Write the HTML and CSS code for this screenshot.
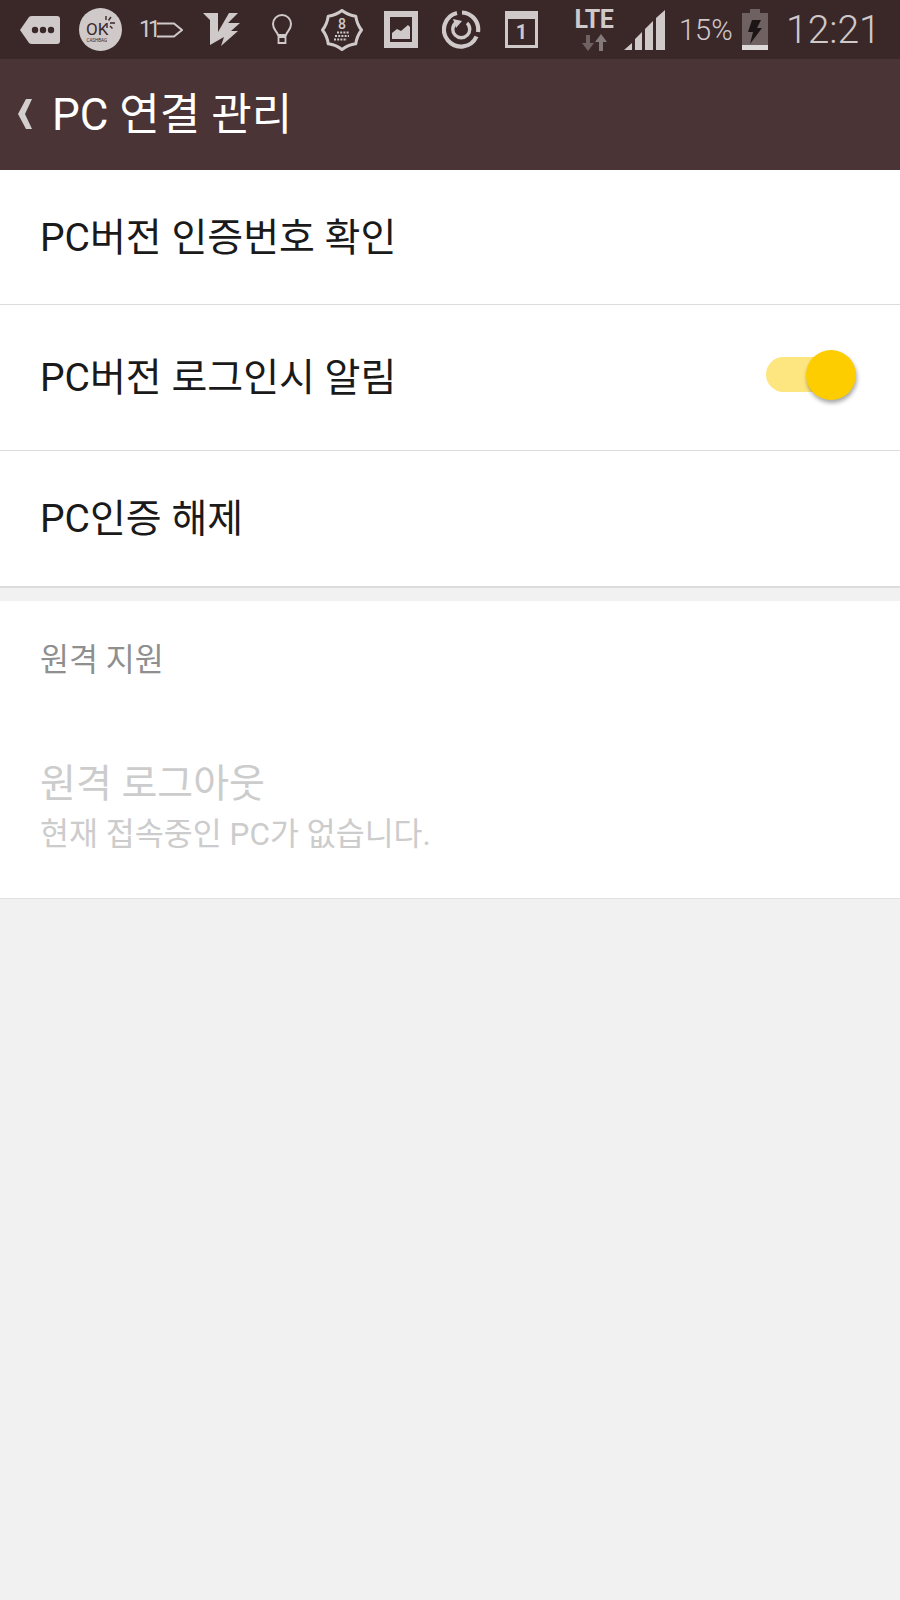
FILE: index.html
```html
<!DOCTYPE html>
<html lang="ko">
  <head>
    <meta charset="UTF-8" />
    <title>PC 연결 관리</title>
    <link rel="stylesheet" href="styles.css">
  </head>
  <body>
    <div class="status-bar">
      <svg class="ic ic-msg" viewBox="0 0 40 30"><path d="M0 15 9 2Q10 1 12 1H37Q40 1 40 4V26Q40 29 37 29H12Q10 29 9 28Z" fill="#cfc9ca"/><circle cx="15" cy="15" r="3.2" fill="#3a2829"/><circle cx="23" cy="15" r="3.2" fill="#3a2829"/><circle cx="31" cy="15" r="3.2" fill="#3a2829"/></svg>
      <svg class="ic ic-ok" viewBox="0 0 43 43"><circle cx="21.5" cy="21.5" r="21.5" fill="#cfc9ca"/><text x="7" y="27" class="ok-text">OK</text><text x="7.5" y="34" class="ok-small">CASHBAG</text><path d="M27 8v4M32 9l-2.500 3.500M36 15h-5M31 18l2.500 2.500M28 16v4" stroke="#3a2829" stroke-width="1.400" fill="none"/></svg>
      <div class="ic-11"><span>11</span><svg viewBox="0 0 26 16"><path d="M0 1.500H17L25 8 17 14.500H0" stroke="#cfc9ca" stroke-width="2" fill="none"/></svg></div>
      <svg class="ic ic-v" viewBox="0 0 37 35"><path d="M0 1H15L15 20 26 1H35L25 11H37L28 19H35L18 34 21 25 7 33 7 8Z" fill="#cfc9ca"/></svg>
      <svg class="ic ic-bulb" viewBox="0 0 22 32"><path d="M7 21C6 17 2 16 2 10A9 9 0 0 1 20 10C20 16 16 17 15 21Z" stroke="#cfc9ca" stroke-width="2" fill="none"/><path d="M7.500 23H14.500V29H7.500Z" stroke="#cfc9ca" stroke-width="1.800" fill="none"/></svg>
      <div class="ic-badge">
        <svg viewBox="0 0 42 42"><path d="M21 1.500Q27.100 6.200 34.800 7.200 35.800 14.900 40.500 21 35.800 27.100 34.800 34.800 27.100 35.800 21 40.500 14.900 35.800 7.200 34.800 6.200 27.100 1.500 21 6.200 14.900 7.200 7.200 14.900 6.200 21 1.500Z" stroke="#cfc9ca" stroke-width="3" fill="none" stroke-linejoin="round"/><path d="M16 23.500h12M14 27h14M13 30.500h13" stroke="#cfc9ca" stroke-width="1.800" stroke-dasharray="2 1.200" fill="none"/></svg>
        <span>8</span>
      </div>
      <svg class="ic ic-pic" viewBox="0 0 34 37"><path fill-rule="evenodd" d="M0 0H34V37H0ZM6 6V31H28V6Z" fill="#cfc9ca"/><path d="M8 28V22L13 18 17 20 24 14 26 16V28Z" fill="#cfc9ca"/></svg>
      <svg class="ic ic-sync" viewBox="0 0 39 39"><path d="M20 2.500A17 17 0 0 1 36 22" stroke="#cfc9ca" stroke-width="4.200" fill="none"/><path d="M34.500 26.500A17 17 0 1 1 15 3" stroke="#cfc9ca" stroke-width="4.200" fill="none"/><path d="M13.500 13A8.500 8.500 0 1 0 25 13" stroke="#cfc9ca" stroke-width="3.400" fill="none"/><path d="M11 9 20 11 14 18Z" fill="#cfc9ca"/></svg>
      <div class="ic-cal"><span>1</span></div>
      <div class="ic-lte">
        <span>LTE</span>
        <svg viewBox="0 0 25 17"><path d="M8 1V9H12L6 17 0 9H4V1Z" fill="#6f6263"/><path d="M17 17V8H13L19 0 25 8H21V17Z" fill="#857a7b"/></svg>
      </div>
      <svg class="ic ic-signal" viewBox="0 0 41 40"><path d="M0 40 8 33V40ZM11 40V29L18 22V40ZM21 40V19L29 11V40ZM32 40V8L41 0V40Z" fill="#cfc9ca"/></svg>
      <span class="battery-text">15%</span>
      <svg class="ic ic-batt" viewBox="0 0 26 41"><path d="M8 0H18V4H26V41H0V4H8Z" fill="#6f6162"/><path d="M0 36H26V41H0Z" fill="#ded9d9"/><path d="M10 11H19L15 19H20L8 35 11 23H6Z" fill="#1b1516"/></svg>
      <span class="clock">12:21</span>
    </div>

    <div class="app-bar">
      <svg class="back" viewBox="0 0 16 32"><path d="M15 1H9L1 16 9 31H15L8 16Z" fill="#d3cfcf"/></svg>
      <h1 class="title">PC 연결 관리</h1>
    </div>

    <div class="group">
      <div class="row row-1">PC버전 인증번호 확인</div>
      <div class="row row-2">
        <span>PC버전 로그인시 알림</span>
        <div class="switch"><div class="knob"></div></div>
      </div>
      <div class="row row-3">PC인증 해제</div>
    </div>

    <div class="group group-remote">
      <div class="section-label">원격 지원</div>
      <div class="item-disabled">
        <div class="item-title">원격 로그아웃</div>
        <div class="item-sub">현재 접속중인 PC가 없습니다.</div>
      </div>
    </div>
  </body>
</html>
```

FILE: styles.css
```css
* {
  box-sizing: border-box;
}
html,
body {
  margin: 0;
  height: 1600px;
  background: #f1f1f1;
  font-family: Roboto, "Noto Sans CJK KR", sans-serif;
  overflow: hidden;
}

.status-bar {
  height: 59px;
  background: #3a2829;
  display: flex;
  align-items: center;
  padding-left: 20px;
  color: #cfc9ca;
}
.ic {
  display: block;
  flex: none;
}
.ic-msg {
  width: 40px;
  height: 30px;
}
.ic-ok {
  width: 43px;
  height: 43px;
  margin-left: 19px;
}
.ok-text {
  font-size: 17px;
  font-weight: 400;
  fill: #3a2829;
}
.ok-small {
  font-size: 4.5px;
  fill: #3a2829;
}
.ic-11 {
  display: flex;
  flex: none;
  align-items: center;
  margin-left: 17px;
  width: 44px;
  font-size: 23px;
}
.ic-11 span {
  width: 18px;
  letter-spacing: -4px;
}
.ic-11 svg {
  flex: none;
  width: 26px;
  height: 16px;
}
.ic-v {
  width: 37px;
  height: 35px;
  margin-left: 20px;
}
.ic-bulb {
  width: 22px;
  height: 32px;
  margin-left: 31px;
}
.ic-badge {
  position: relative;
  flex: none;
  width: 42px;
  height: 42px;
  margin-left: 28px;
}
.ic-badge svg {
  display: block;
  width: 42px;
  height: 42px;
}
.ic-badge span {
  position: absolute;
  left: 0;
  right: 0;
  top: 8px;
  text-align: center;
  font-size: 14px;
  line-height: 14px;
  font-weight: 500;
}
.ic-pic {
  width: 34px;
  height: 37px;
  margin-left: 21px;
}
.ic-sync {
  width: 39px;
  height: 39px;
  margin-left: 24px;
}
.ic-cal {
  flex: none;
  width: 33px;
  height: 37px;
  margin-left: 24px;
  border: 3px solid #cfc9ca;
  border-top-width: 8px;
  font-size: 20px;
  font-weight: 700;
  line-height: 26px;
  text-align: center;
}
.ic-lte {
  flex: none;
  width: 42px;
  margin-left: 35px;
  display: flex;
  flex-direction: column;
  align-items: center;
  font-size: 25px;
  font-weight: 700;
  line-height: 22px;
  letter-spacing: -0.5px;
}
.ic-lte svg {
  width: 25px;
  height: 17px;
  margin-top: 3px;
}
.ic-signal {
  width: 41px;
  height: 40px;
  margin-left: 9px;
}
.battery-text {
  margin-left: 14px;
  width: 55px;
  font-size: 29px;
  font-weight: 300;
  white-space: nowrap;
}
.ic-batt {
  width: 26px;
  height: 41px;
  margin-left: 8px;
}
.clock {
  margin-left: 18px;
  font-size: 39px;
  font-weight: 300;
  white-space: nowrap;
}

.app-bar {
  height: 111px;
  background: #4b3436;
  display: flex;
  align-items: center;
  padding-left: 17px;
  padding-bottom: 2px;
}
.back {
  width: 16px;
  height: 32px;
  flex: none;
}
.title {
  margin: 0 0 6px 19px;
  color: #fff;
  font-size: 44px;
  font-weight: 400;
  white-space: nowrap;
}

.group {
  background: #fff;
}
.row {
  display: flex;
  align-items: center;
  justify-content: space-between;
  padding: 0 64px 7px 40px;
  font-size: 39px;
  color: #1a1a1a;
  border-bottom: 1px solid #dcdcdc;
}
.row-1 {
  height: 135px;
}
.row-2 {
  height: 146px;
}
.row-3 {
  height: 137px;
  padding-bottom: 7px;
  border-bottom: 2px solid #dcdcdc;
}
.switch {
  position: relative;
  width: 70px;
  height: 35px;
  border-radius: 18px;
  background: #fde57f;
}
.knob {
  position: absolute;
  right: -20px;
  top: -7px;
  width: 50px;
  height: 50px;
  border-radius: 50%;
  background: #fdcd00;
  box-shadow: 1px 3px 4px rgba(0, 0, 0, 0.35);
}

.group-remote {
  margin-top: 13px;
  height: 298px;
  padding: 40px 40px 0;
  border-bottom: 1px solid #e2e2e2;
}
.section-label {
  font-size: 31.5px;
  line-height: 40px;
  color: #8f8f8f;
}
.item-disabled {
  margin-top: 80px;
}
.item-title {
  font-size: 39px;
  line-height: 46px;
  color: #cccccc;
}
.item-sub {
  margin-top: 8px;
  font-size: 31.5px;
  line-height: 40px;
  color: #cccccc;
}
```
